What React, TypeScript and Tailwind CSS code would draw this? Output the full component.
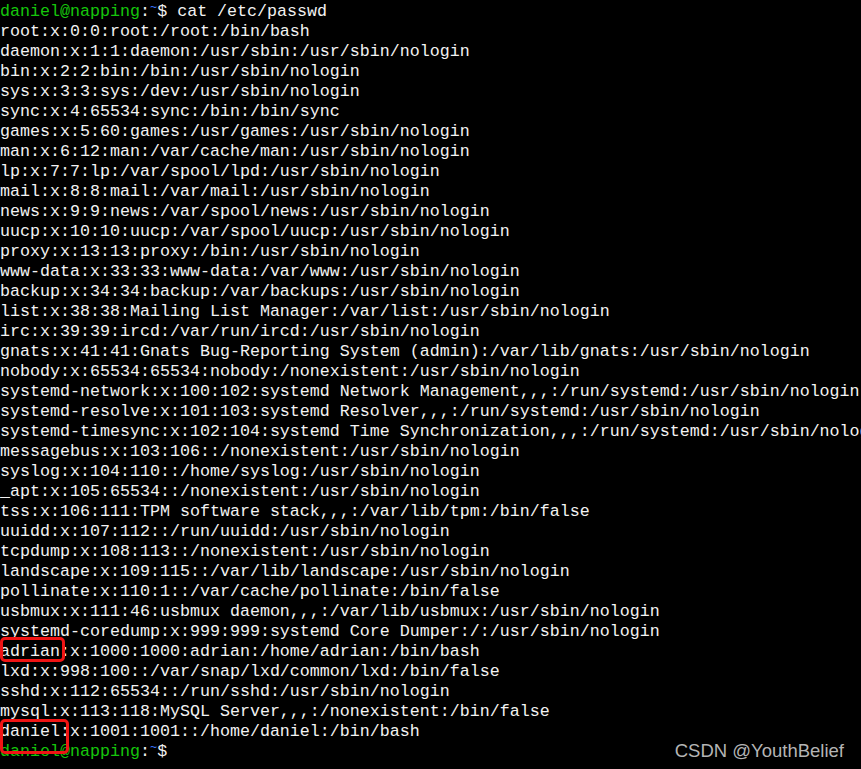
const lines: string[] = [
  "root:x:0:0:root:/root:/bin/bash",
  "daemon:x:1:1:daemon:/usr/sbin:/usr/sbin/nologin",
  "bin:x:2:2:bin:/bin:/usr/sbin/nologin",
  "sys:x:3:3:sys:/dev:/usr/sbin/nologin",
  "sync:x:4:65534:sync:/bin:/bin/sync",
  "games:x:5:60:games:/usr/games:/usr/sbin/nologin",
  "man:x:6:12:man:/var/cache/man:/usr/sbin/nologin",
  "lp:x:7:7:lp:/var/spool/lpd:/usr/sbin/nologin",
  "mail:x:8:8:mail:/var/mail:/usr/sbin/nologin",
  "news:x:9:9:news:/var/spool/news:/usr/sbin/nologin",
  "uucp:x:10:10:uucp:/var/spool/uucp:/usr/sbin/nologin",
  "proxy:x:13:13:proxy:/bin:/usr/sbin/nologin",
  "www-data:x:33:33:www-data:/var/www:/usr/sbin/nologin",
  "backup:x:34:34:backup:/var/backups:/usr/sbin/nologin",
  "list:x:38:38:Mailing List Manager:/var/list:/usr/sbin/nologin",
  "irc:x:39:39:ircd:/var/run/ircd:/usr/sbin/nologin",
  "gnats:x:41:41:Gnats Bug-Reporting System (admin):/var/lib/gnats:/usr/sbin/nologin",
  "nobody:x:65534:65534:nobody:/nonexistent:/usr/sbin/nologin",
  "systemd-network:x:100:102:systemd Network Management,,,:/run/systemd:/usr/sbin/nologin",
  "systemd-resolve:x:101:103:systemd Resolver,,,:/run/systemd:/usr/sbin/nologin",
  "systemd-timesync:x:102:104:systemd Time Synchronization,,,:/run/systemd:/usr/sbin/nologin",
  "messagebus:x:103:106::/nonexistent:/usr/sbin/nologin",
  "syslog:x:104:110::/home/syslog:/usr/sbin/nologin",
  "_apt:x:105:65534::/nonexistent:/usr/sbin/nologin",
  "tss:x:106:111:TPM software stack,,,:/var/lib/tpm:/bin/false",
  "uuidd:x:107:112::/run/uuidd:/usr/sbin/nologin",
  "tcpdump:x:108:113::/nonexistent:/usr/sbin/nologin",
  "landscape:x:109:115::/var/lib/landscape:/usr/sbin/nologin",
  "pollinate:x:110:1::/var/cache/pollinate:/bin/false",
  "usbmux:x:111:46:usbmux daemon,,,:/var/lib/usbmux:/usr/sbin/nologin",
  "systemd-coredump:x:999:999:systemd Core Dumper:/:/usr/sbin/nologin",
  "adrian:x:1000:1000:adrian:/home/adrian:/bin/bash",
  "lxd:x:998:100::/var/snap/lxd/common/lxd:/bin/false",
  "sshd:x:112:65534::/run/sshd:/usr/sbin/nologin",
  "mysql:x:113:118:MySQL Server,,,:/nonexistent:/bin/false",
  "daniel:x:1001:1001::/home/daniel:/bin/bash",
];

function Prompt({ cmd }: { cmd?: string }) {
  return (
    <div className="h-5 leading-5">
      <span className="text-[#16c60c]">daniel@napping</span>
      <span>:</span>
      <span className="text-[#3b78ff] text-[12px] align-top leading-none">~</span>
      <span>$ {cmd}</span>
    </div>
  );
}

export default function App() {
  return (
    <div className="w-[861px] h-[769px] bg-black overflow-hidden relative">
      <div
        className="pt-[2px] text-[#f2f2f2] text-[16.667px] whitespace-pre"
        style={{ fontFamily: '"Liberation Mono", "DejaVu Sans Mono", monospace' }}
      >
        <Prompt cmd="cat /etc/passwd" />
        {lines.map((l, i) => (
          <div key={i} className="h-5 leading-5">
            {l}
          </div>
        ))}
        <Prompt />
      </div>
      {/* red highlight boxes */}
      <div className="absolute left-0 top-[637px] w-[65px] h-[25px] border-[3px] border-[#f01414] rounded-[5px]" />
      <div className="absolute left-0 top-[719px] w-[69px] h-[35px] border-[3px] border-[#f01414] rounded-[5px]" />
      <div
        className="absolute right-[17px] top-[741px] text-[#b4b4b4] text-[18.5px] leading-5"
        style={{ fontFamily: '"Liberation Sans", Arial, sans-serif' }}
      >
        CSDN @YouthBelief
      </div>
    </div>
  );
}
